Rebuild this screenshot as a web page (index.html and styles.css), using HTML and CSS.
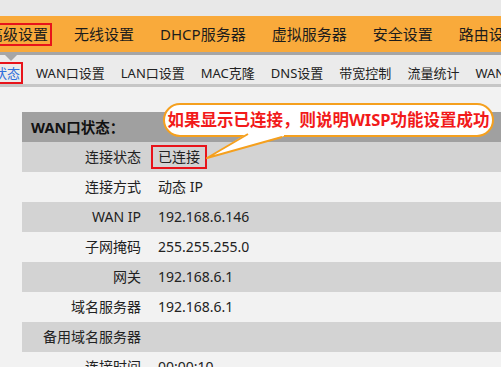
FILE: index.html
```html
<!DOCTYPE html>
<html>
<head>
    <meta charset="utf-8">
    <title>WAN口状态</title>
    <link rel="stylesheet" href="styles.css">
</head>
<body>
    <div class="top-strip"></div>
    <nav class="main-nav">
        <span class="nav-item"><span class="mark mark-main">高级设置</span></span>
        <span class="nav-item">无线设置</span>
        <span class="nav-item">DHCP服务器</span>
        <span class="nav-item">虚拟服务器</span>
        <span class="nav-item">安全设置</span>
        <span class="nav-item">路由设置</span>
    </nav>
    <div class="nav-rule"><span class="pointer"></span></div>
    <nav class="sub-nav">
        <span class="sub-item active"><span class="mark mark-sub">状态</span></span>
        <span class="sub-item">WAN口设置</span>
        <span class="sub-item">LAN口设置</span>
        <span class="sub-item">MAC克隆</span>
        <span class="sub-item">DNS设置</span>
        <span class="sub-item">带宽控制</span>
        <span class="sub-item">流量统计</span>
        <span class="sub-item">WAN介入</span>
    </nav>

    <main class="content">
        <div class="status-table">
            <div class="table-title">WAN口状态：</div>
            <div class="row"><span class="label">连接状态</span><span class="value"><span class="mark mark-value">已连接</span></span></div>
            <div class="row"><span class="label">连接方式</span><span class="value">动态 IP</span></div>
            <div class="row"><span class="label">WAN IP</span><span class="value">192.168.6.146</span></div>
            <div class="row"><span class="label">子网掩码</span><span class="value">255.255.255.0</span></div>
            <div class="row"><span class="label">网关</span><span class="value">192.168.6.1</span></div>
            <div class="row"><span class="label">域名服务器</span><span class="value">192.168.6.1</span></div>
            <div class="row"><span class="label">备用域名服务器</span><span class="value"></span></div>
            <div class="row"><span class="label">连接时间</span><span class="value">00:00:10</span></div>
        </div>

        <div class="callout">
            <div class="callout-text">如果显示已连接，则说明WISP功能设置成功</div>
            <svg class="callout-tail" width="90" height="32" viewBox="0 0 90 32">
                <polygon points="46,0 5,25 82,3 82,0" fill="#fff"/>
                <polyline points="46,1 5,25 80,4" fill="none" stroke="#f5a01e" stroke-width="2" stroke-linejoin="round"/>
            </svg>
        </div>
    </main>
</body>
</html>
```

FILE: styles.css
```css
* {
    box-sizing: border-box;
    margin: 0;
    padding: 0;
}

body {
    width: 501px;
    height: 367px;
    overflow: hidden;
    background: #f2f2f2;
    font-family: "Noto Sans", "Noto Sans CJK SC", sans-serif;
    color: #1c1c1c;
}

.top-strip {
    height: 16px;
    background: #e8e8e8;
}

.main-nav {
    height: 36px;
    background: #f9aa3b;
    display: flex;
    align-items: center;
    gap: 26px;
    margin-left: -12px;
    white-space: nowrap;
    font-size: 15px;
    line-height: 19px;
    padding-top: 1px;
}

.nav-rule {
    height: 3px;
    background: #a6a6a6;
    position: relative;
}

.pointer {
    position: absolute;
    left: 5px;
    top: 3px;
    border-left: 6px solid transparent;
    border-right: 6px solid transparent;
    border-top: 6px solid #a6a6a6;
}

.sub-nav {
    height: 32px;
    background: #ebebeb;
    border-bottom: 3px solid #c6c6c6;
    display: flex;
    align-items: flex-start;
    gap: 16px;
    margin-left: -6px;
    padding-top: 10px;
    font-size: 13px;
    line-height: 17px;
    white-space: nowrap;
    color: #222;
}

.sub-item.active {
    color: #2f6fdc;
}

.mark {
    display: inline-block;
    border: 2px solid #e8141b;
}

.mark-main {
    padding: 0 2px;
    margin: -2px -4px;
}

.mark-sub {
    padding: 0 1px;
    margin: -3px -3px -2px;
    padding-top: 1px;
}

.mark-value {
    line-height: 20px;
    padding: 0 5px;
    margin-left: -7px;
}

.content {
    position: relative;
    padding: 25px 0 0 22px;
}

.status-table {
    width: 479px;
    font-size: 14px;
    color: #222;
}

.table-title {
    height: 30px;
    line-height: 30px;
    background: #a0a0a0;
    padding-left: 9px;
    font-weight: bold;
    font-size: 14.5px;
    color: #111;
}

.row {
    height: 30px;
    display: grid;
    grid-template-columns: 119px 1fr;
    column-gap: 17px;
    align-items: center;
    line-height: 20px;
}

.row:nth-child(even) {
    background: #d3d3d3;
}

.label {
    text-align: right;
}

.callout {
    position: absolute;
    left: 163px;
    top: 16px;
    width: 331px;
    height: 34px;
}

.callout-text {
    height: 34px;
    border: 2px solid #f5a01e;
    border-radius: 17px;
    background: #fff;
    color: #f21a1a;
    font-weight: bold;
    font-size: 16.5px;
    line-height: 30px;
    text-align: center;
    white-space: nowrap;
}

.callout-tail {
    position: absolute;
    left: 39px;
    top: 30px;
}
```
